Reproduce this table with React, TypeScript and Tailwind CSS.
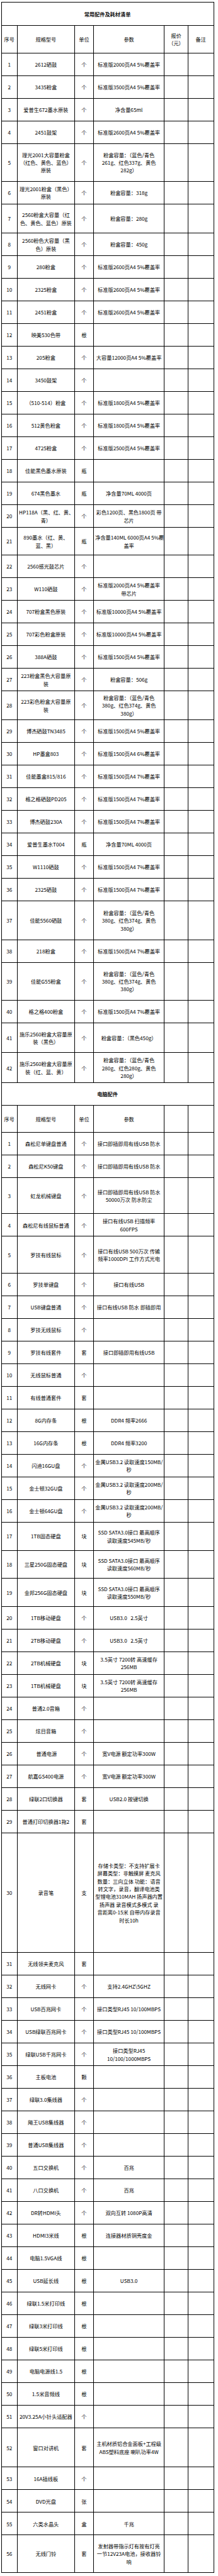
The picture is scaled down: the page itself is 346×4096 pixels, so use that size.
type Row = [string, string, string, string, string?];

const consumables: Row[] = [
  ["1", "2612硒鼓", "个", "标准版2000页A4 5%覆盖率"],
  ["2", "3435粉盒", "个", "标准版3500页A4 5%覆盖率"],
  ["3", "爱普生672墨水原装", "个", "净含量65ml"],
  ["4", "2451鼓架", "个", "标准版2600页A4 5%覆盖率"],
  ["5", "理光2001大容量粉盒\n（红色、黄色、蓝色）\n原装", "个", "粉盒容量：（蓝色/青色\n261g、红色337g、黄色\n282g）", "h-[60.2px]"],
  ["6", "理光2001粉盒（黑色）\n原装", "个", "粉盒容量：318g"],
  ["7", "2560粉盒大容量（红\n色、黄色、蓝色）原装", "个", "粉盒容量：280g", "h-[46.3px]"],
  ["8", "2560粉色大容量（黑\n色）原装", "个", "粉盒容量：450g"],
  ["9", "280粉盒", "个", "标准版2600页A4 5%覆盖率"],
  ["10", "2325粉盒", "个", "标准版2600页A4 5%覆盖率"],
  ["11", "2451粉盒", "个", "标准版2600页A4 5%覆盖率"],
  ["12", "映美530色带", "根", ""],
  ["13", "205粉盒", "个", "大容量12000页A4 5%覆盖率"],
  ["14", "3450鼓架", "个", ""],
  ["15", "（510-514）粉盒", "个", "标准版1800页A4 5%覆盖率"],
  ["16", "512黄色粉盒", "个", "标准版1800页A4 5%覆盖率"],
  ["17", "4725粉盒", "个", "标准版2500页A4 5%覆盖率"],
  ["18", "佳能黑色墨水原装", "瓶", ""],
  ["19", "674黑色墨水", "瓶", "净含量70ML 4000页"],
  ["20", "HP118A（黑、红、黄、\n青）", "个", "彩色1200页、黑色1800页 带\n芯片"],
  ["21", "890墨水（红、黄、\n蓝、黑）", "瓶", "净含量140ML 6000页A4 5%覆\n盖率", "h-[43.9px]"],
  ["22", "2560感光鼓芯片", "个", ""],
  ["23", "W110硒鼓", "个", "标准版2000页A4 5%覆盖率\n带芯片"],
  ["24", "707粉盒黑色原装", "个", "标准版10000页A4 5%覆盖率"],
  ["25", "707彩色粉盒原装", "个", "标准版10000页A4 5%覆盖率"],
  ["26", "388A硒鼓", "个", "标准版1500页A4 5%覆盖率"],
  ["27", "223粉盒黑色大容量原\n装", "个", "粉盒容量：506g"],
  ["28", "223彩色粉盒大容量原\n装", "个", "粉盒容量：（蓝色/青色\n380g、红色374g、黄色\n380g）", "h-[45.9px]"],
  ["29", "博杰硒鼓TN3485", "个", "标准版1500页A4 5%覆盖率"],
  ["30", "HP墨盒803", "个", "标准版1500页A4 6%覆盖率"],
  ["31", "佳能墨盒815/816", "个", "标准版1500页A4 7%覆盖率"],
  ["32", "格之格硒鼓PD205", "个", "标准版1500页A4 7%覆盖率"],
  ["33", "博杰硒鼓230A", "个", "标准版1500页A4 7%覆盖率"],
  ["34", "爱普生墨水T004", "瓶", "净含量70ML 4000页"],
  ["35", "W1110硒鼓", "个", "标准版1500页A4 7%覆盖率"],
  ["36", "2325硒鼓", "个", "标准版1500页A4 7%覆盖率"],
  ["37", "佳能5560硒鼓", "个", "粉盒容量：（蓝色/青色\n380g、红色374g、黄色\n380g）", "h-[61.9px]"],
  ["38", "218粉盒", "个", "标准版1500页A4 7%覆盖率"],
  ["39", "佳能G55粉盒", "个", "粉盒容量：（蓝色/青色\n380g、红色374g、黄色\n380g）", "h-[59.8px]"],
  ["40", "格之格400粉盒", "个", "标准版1500页A4 7%覆盖率"],
  ["41", "施乐2560粉盒大容量原\n装（黑色）", "个", "粉盒容量：（黑色450g）", "h-[47.8px]"],
  ["42", "施乐2560粉盒大容量原\n装（红、蓝、黄）", "个", "粉盒容量：（蓝色/青色\n280g、红色280g、黄色\n280g）", "h-[47.8px]"],
];

const computerParts: Row[] = [
  ["1", "森松尼单键盘普通", "个", "接口即插即用有线USB 防水"],
  ["2", "森松尼K50键盘", "个", "接口即插即用有线USB 防水"],
  ["3", "虹龙机械键盘", "个", "接口即插即用有线USB 防水\n50000万次 防水防尘", "h-[57.6px]"],
  ["4", "森松尼有线鼠标普通", "个", "接口有线USB 扫描频率\n600FPS"],
  ["5", "罗技有线鼠标", "个", "接口有线USB 500万次 传输\n频率1000DPI 工作方式光电", "h-[58.5px]"],
  ["6", "罗技单键盘", "个", "接口有线USB"],
  ["7", "USB键盘普通", "个", "接口有线USB 防水 即插即用"],
  ["8", "罗技无线鼠标", "个", ""],
  ["9", "罗技有线套件", "套", "接口即插即用有线USB"],
  ["10", "无线鼠标普通", "个", ""],
  ["11", "有线普通套件", "套", ""],
  ["12", "8G内存条", "根", "DDR4 频率2666"],
  ["13", "16G内存条", "根", "DDR4 频率3200"],
  ["14", "闪迪16GU盘", "个", "金属USB3.2 读取速度150MB/\n秒"],
  ["15", "金士顿32GU盘", "个", "金属USB3.2 读取速度200MB/\n秒"],
  ["16", "金士顿64GU盘", "个", "金属USB3.2 读取速度200MB/\n秒"],
  ["17", "1TB固态硬盘", "块", "SSD SATA3.0接口 最高顺序\n读取速度545MB/秒", "h-[44.7px]"],
  ["18", "三星250G固态硬盘", "块", "SSD SATA3.0接口 最高顺序\n读取速度560MB/秒", "h-[44.7px]"],
  ["19", "金邦256G固态硬盘", "块", "SSD SATA3.0接口 最高顺序\n读取速度550MB/秒", "h-[44.7px]"],
  ["20", "1TB移动硬盘", "个", "USB3.0   2.5英寸"],
  ["21", "2TB移动硬盘", "个", "USB3.0   2.5英寸"],
  ["22", "2TB机械硬盘", "块", "3.5英寸 7200转 高速缓存\n256MB"],
  ["23", "1TB机械硬盘", "块", "3.5英寸 7200转 高速缓存\n256MB"],
  ["24", "普通2.0音箱", "个", ""],
  ["25", "炫目音箱", "个", ""],
  ["26", " 普通电源", "个", "宽V电源 额定功率300W"],
  ["27", "航嘉GS400电源", "个", "宽V电源 额定功率300W"],
  ["28", "绿联2口切换器", "套", "USB2.0 按键切换"],
  ["29", "普通打印切换器1拖2", "套", ""],
  [
    "30",
    "录音笔",
    "支",
    "存储卡类型：不支持扩展卡\n屏幕类型：非触摸屏 麦克风\n数量：三向立体 功能：语音\n转文字，录音，翻译电池类\n型锂电池310MAH 扬声器内置\n扬声器 录音模式多模式 录\n音距离0-15米 自带内存录音\n时长10h",
    "h-[190.2px]",
  ],
  ["31", "无线领夹麦克风", "套", ""],
  ["32", "无线网卡", "个", "支持2.4GHZ\\5GHZ"],
  ["33", "USB百兆网卡", "个", "接口类型RJ45 10/100MBPS"],
  ["34", "USB绿联百兆网卡", "个", "接口类型RJ45 10/100MBPS"],
  ["35", "绿联USB千兆网卡", "个", "接口类型RJ45\n10/100/1000MBPS"],
  ["36", "主板电池", "颗", ""],
  ["37", "绿联3.0集线器", "个", ""],
  ["38", "飚王USB集线器", "个", ""],
  ["39", "普通USB集线器", "个", ""],
  ["40", "五口交换机", "个", "百兆"],
  ["41", "八口交换机", "个", "百兆"],
  ["42", "DR转HDMI头", "个", "双向互转 1080P高清"],
  ["43", "HDMI3米线", "根", "连接器材质铜壳度金"],
  ["44", "电脑1.5VGA线", "根", ""],
  ["45", "USB延长线", "根", "USB3.0"],
  ["46", "绿联1.5米打印线", "根", ""],
  ["47", "绿联3米打印线", "根", ""],
  ["48", "绿联5米打印线", "根", ""],
  ["49", "电脑电源线1.5", "根", ""],
  ["50", "1.5米音频线", "根", ""],
  ["51", "20V3.25A小针头适配器", "个", ""],
  ["52", "窗口对讲机", "套", "主机材质铝合金面板+工程级\nABS塑料底座 喇叭功率4W", "h-[62.4px]"],
  ["53", "16A插线板", "个", ""],
  ["54", "DVD光盘", "张", ""],
  ["55", "六类水晶头", "盒", "千兆"],
  ["56", "无线门铃", "套", "发射器带指示灯有按有灯亮\n一节12V23A电池，接收器铃\n响", "h-[59.4px]"],
];

const cell = "border border-black px-[2px] py-0 text-center align-middle whitespace-pre";

const Section = ({ title, rows, priced }: { title: string; rows: Row[]; priced: boolean }) => (
  <>
    {/* section title */}
    <tr className={priced ? "h-[36.8px]" : "h-[35.9px]"}>
      <td colSpan={6} className={`${cell} font-bold text-[#111]`}>{title}</td>
    </tr>
    <tr className={priced ? "h-[43.9px]" : "h-[42.6px]"}>
      <td className={cell}>序号</td>
      <td className={cell}>规格型号</td>
      <td className={cell}>单位</td>
      <td className={cell}>参数</td>
      <td className={cell}>{priced ? "报价\n（元）" : ""}</td>
      <td className={cell}>{priced ? "备注" : ""}</td>
    </tr>
    {rows.map((r) => (
      <tr key={title + r[0]} className={r[4] ?? "h-[36px]"}>
        <td className={cell}>{r[0]}</td>
        <td className={cell}>{r[1]}</td>
        <td className={cell}>{r[2]}</td>
        <td className={cell}>{r[3]}</td>
        <td className={cell}></td>
        <td className={cell}></td>
      </tr>
    ))}
  </>
);

export default function App() {
  return (
    <div className="w-[346px] bg-white pt-[3px] pl-[1.5px] font-['Noto_Sans_CJK_SC',sans-serif] text-[8.2px] leading-[12.4px] text-black">
      <table className="w-[337px] table-fixed border-collapse">
        <colgroup>
          <col className="w-[25.6px]" />
          <col className="w-[90.5px]" />
          <col className="w-[30.6px]" />
          <col className="w-[111.8px]" />
          <col className="w-[38.1px]" />
          <col className="w-[40.4px]" />
        </colgroup>
        <tbody>
          <Section title="常用配件及耗材清单" rows={consumables} priced />
          <Section title="电脑配件" rows={computerParts} priced={false} />
        </tbody>
      </table>
    </div>
  );
}
